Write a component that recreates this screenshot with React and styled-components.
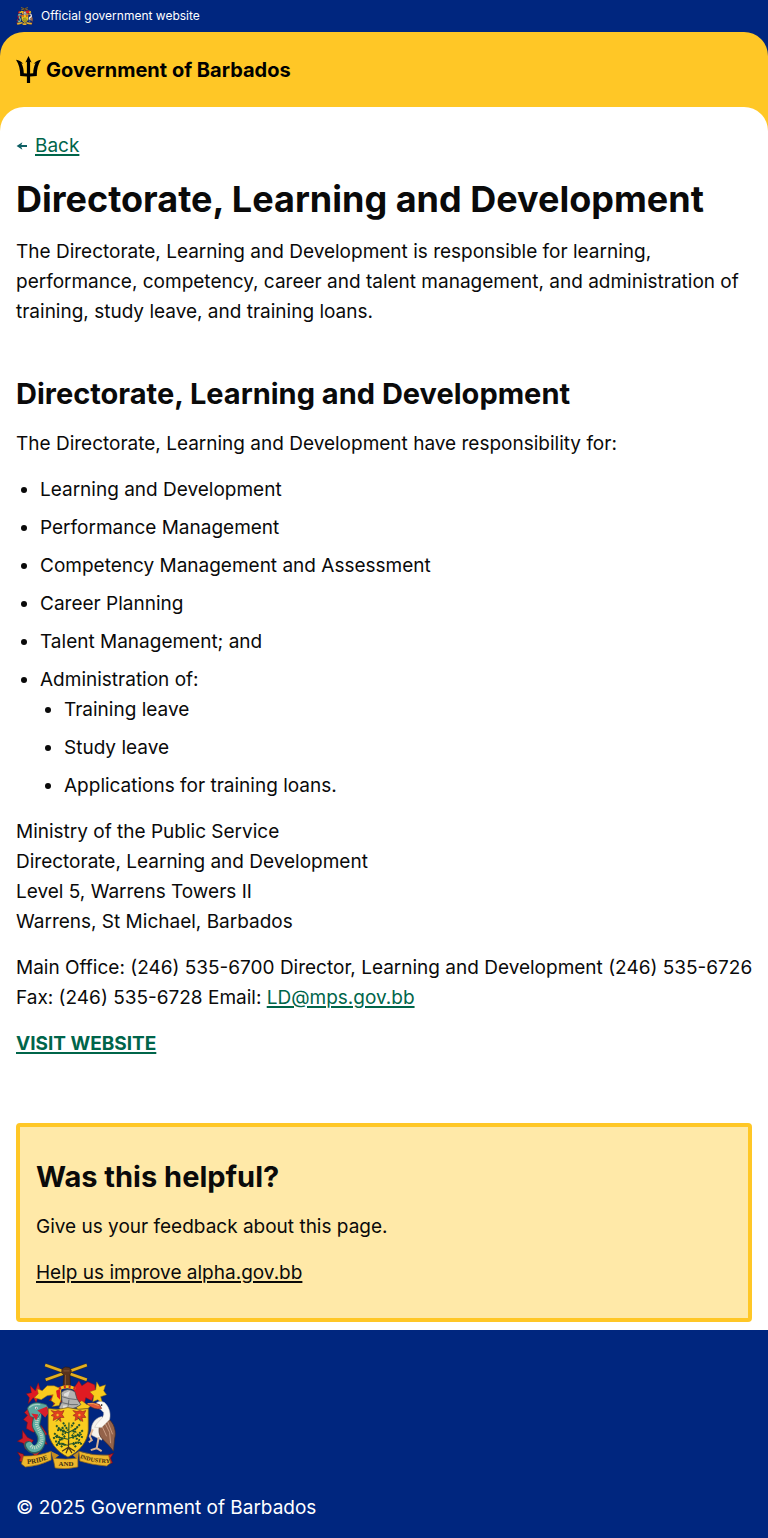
import React, { useId } from "react";
import styled, { createGlobalStyle } from "styled-components";

const color = {
  blue: "#00267f",
  yellow: "#ffc726",
  cream: "#ffe9a8",
  green: "#00654a",
  teal: "#0e5f64",
  ink: "#0a0a0a",
};

const GlobalStyle = createGlobalStyle`
  *, *::before, *::after { box-sizing: border-box; }
  body {
    margin: 0;
    background: #fff;
    color: ${color.ink};
    font-family: Inter, Roboto, sans-serif;
    font-size: 19px;
    line-height: 30px;
  }
  h1, h2, p, ul { margin: 0; }
`;

const Banner = styled.div`
  display: flex;
  align-items: center;
  gap: 8px;
  height: 32px;
  padding: 0 16px;
  background: ${color.blue};
  color: #fff;
  font-size: 12px;
  line-height: 16px;
`;

const HeaderBackdrop = styled.div`
  background: ${color.blue};
`;

const Header = styled.header`
  display: flex;
  align-items: center;
  height: 75px;
  padding: 0 16px;
  border-radius: 24px 24px 0 0;
  background: ${color.yellow};
`;

const Brand = styled.a`
  display: flex;
  align-items: center;
  gap: 5px;
  color: #000;
  font-size: 20px;
  font-weight: 700;
  line-height: 28px;
  text-decoration: none;
`;

const MainBackdrop = styled.div`
  background: ${color.yellow};
`;

const Main = styled.main`
  display: flex;
  flex-direction: column;
  padding: 24px 16px 8px;
  border-radius: 24px 24px 0 0;
  background: #fff;
`;

const Link = styled.a`
  color: ${(p) => (p.$plain ? color.ink : color.green)};
  font-weight: ${(p) => (p.$strong ? 700 : 400)};
  text-decoration: underline;
  text-decoration-thickness: 2px;
  text-underline-offset: 2px;
`;

const BackRow = styled.nav`
  display: flex;
  align-items: center;
  gap: 7px;
  margin-bottom: 16px;
`;

const PageTitle = styled.h1`
  font-size: 36px;
  font-weight: 700;
  line-height: 44px;
`;

const SectionTitle = styled.h2`
  font-size: 29px;
  font-weight: 700;
  line-height: 38px;
`;

const Stack = styled.section`
  display: flex;
  flex-direction: column;
  gap: 16px;
  margin-bottom: ${(p) => p.$after || 0}px;
`;

const List = styled.ul`
  display: flex;
  flex-direction: column;
  gap: 8px;
  padding-left: 24px;
  list-style-type: disc;
`;

const PhoneLine = styled.span`
  @media (min-width: 768px) {
    display: block;
    white-space: nowrap;
  }
`;

const Feedback = styled.aside`
  display: flex;
  flex-direction: column;
  gap: 16px;
  padding: 31px 16px 30px;
  border: 4px solid ${color.yellow};
  border-radius: 4px;
  background: ${color.cream};
`;

const Footer = styled.footer`
  display: flex;
  flex-direction: column;
  align-items: flex-start;
  gap: 24px;
  padding: 32px 16px 16px;
  background: ${color.blue};
  color: #fff;
`;

const Drawing = styled.svg`
  display: block;
  flex: none;
`;

const Trident = () => (
  <Drawing width="25" height="27" viewBox="0 0 25 27" aria-hidden="true">
    <path d="M12.5 0 15.6 6.400 14.100 5.700V17.600L17.200 17.300C17.300 13.400 18 10.200 19.600 7.300L17.700 7.700C19.900 5.200 22 4.300 25 3.700 22.100 8.300 20.700 13 20.800 20L14.100 20.400V27H10.900V20.400L4.200 20C4.300 13 2.900 8.300 0 3.700 3 4.300 5.100 5.200 7.300 7.700L5.400 7.300C7 10.200 7.700 13.400 7.800 17.300L10.900 17.600V5.700L9.400 6.400Z" />
  </Drawing>
);

const BackArrow = () => (
  <Drawing width="12" height="10" viewBox="0 0 12 10" aria-hidden="true">
    <path d="M0.6 5 6.400 1.200 5.300 4H11V6H5.300L6.400 8.800Z" fill={color.teal} />
  </Drawing>
);

const Crest = ({ width, height, lettered }) => {
  const id = useId();
  return (
    <Drawing width={width} height={height} viewBox="0 0 100 108" role="img" aria-label="Coat of arms of Barbados">
      {/* crossed sugar canes held by a hand */}
      <path d="M29.5 18 71 3M29 3 71 18" stroke="#4b3a16" strokeWidth="3.600" />
      <path d="M29.5 18 71 3M29 3 71 18" stroke="#e2b023" strokeWidth="2.600" />
      <path d="M46 7 49 5 53.500 5.500 55.500 9 54 13 54.500 25H47L48 13 45.500 11Z" fill="#59331d" stroke="#2b170d" strokeWidth=".6" />
      <path d="M47.500 9H53.500M49.500 13V23" stroke="#95633b" strokeWidth=".7" />
      {/* mantling: outer leaves, then the inner ones */}
      <g strokeWidth=".5" stroke="#7d1118" fill="#e01b22">
        <path d="M22 21 24 28 28 31 22 34 20 41 17 36 12 42 13 36 10 32 15 31 14 24 19 29Z" />
        <path d="M33 32 38 27 45 28 43 35 46 41 41 40 37 43 38 38 33 39 36 35Z" />
        <path d="M58 26 63 19 66 24 72 20 79 23 80 30 86 33 78 34 76 39 70 36 68 44 62 40 58 36Z" />
      </g>
      <g strokeWidth=".5" stroke="#8a6514" fill="#f9cb1d">
        <path d="M45 27 38 24 31 24 26 29 21 27 22 32 18 36 25 38 31 34 37 33 35 39 39 42 36 45 43 44 45 38Z" />
        <path d="M81 20 84 25 90 23 88 29 91 33 85 35 87 42 82 38 77 40 78 34 74 30 80 28ZM59 44 66 39 71 43 78 42 72 47 62 48Z" />
      </g>
      <path d="M40 29 44 27 44 38 41 35Z" fill="#e01b22" />
      {/* wreath and helmet */}
      <path d="M43 27Q51 23 59.500 27" fill="none" stroke="#f4c31c" strokeWidth="3" />
      <path d="M43 27Q51 23 59.500 27" fill="none" stroke="#c92520" strokeWidth="3" strokeDasharray="2 3" />
      <path d="M45 31Q51 25 59 30L61 37 65 43 60 46 46 50 43 46 46 40Z" fill="#b3b2b0" stroke="#494949" strokeWidth=".8" />
      <path d="M46 35 53 37 61 38M46 41 55 43 62 43M53 38 52 45" fill="none" stroke="#62656a" strokeWidth=".9" />
      <path d="M48 32 54 29 52 35 48 34ZM47 44 52 44 47 48Z" fill="#e0e0de" />
      {/* shield */}
      <path d="M32 47Q42 49 52 46 62 49 72.500 47V68C72.500 80 63 91 52 96 41 91 32 80 32 68Z" fill="#f9cd20" stroke="#806016" strokeWidth=".8" />
      <g fill="#e0401f" stroke="#a12f1b" strokeWidth=".7">
        <path d="M35 49 39 50 42 49 45 50 48 49 46 53 48 56 44 56 45 60 41 57 37 59 38 55 35 54 38 52Z" />
        <path d="M57 49 61 50 64 49 67 50 70 49 68 53 70 56 66 56 67 60 63 57 59 59 60 55 57 54 60 52Z" />
      </g>
      <path d="M40 60 44 56M65 60 62 56" stroke="#376125" strokeWidth="1" />
      <circle cx="41.500" cy="53.500" r="1.200" fill="#f5bd25" />
      <circle cx="63.500" cy="53.500" r="1.200" fill="#f5bd25" />
      <g fill="none" stroke="#20522a">
        <path d="M53 61 52.500 88M52 84 41 82M53 83 65 81M52 78 39 75M53 77 66 73M53 72 42 67M53 71 62 66" strokeWidth="1.100" />
        <path d="M38 72 43 76 47 79M37 77 42 75M40 64 45 69 50 72M41 69 46 68M47 61 50 66 52 69M58 61 55 66M64 63 59 68 56 71M67 69 61 74 56 77M67 76 62 74M66 83 62 81 57 82M40 84 45 82 50 84M39 80 44 81M43 79 47 77M48 70 46 65M58 70 61 71M60 77 64 79M45 86 48 82M60 86 57 82M49 76 46 72M56 75 58 72" strokeWidth="2" strokeDasharray="2 .8" />
      </g>
      <path d="M52.500 79V88M46 90 52.500 86 59 90M50 92 52.500 86 56 92" fill="none" stroke="#48351b" strokeWidth="1.200" />
      {/* dolphin: red fins under a scaled body */}
      <g fill="#cc1c2a" stroke="#7a101a" strokeWidth=".6">
        <path d="M15 44 8 51 11 54 7 58 11 61 10 67 17 71 22 68 17 58Z" />
        <path d="M6 69 11 76 17 79 14 84 9 88 7 82 1 80 6 77Z" />
        <path d="M25 64 31 73 27 75 31 83 25 82ZM13 87 19 96 25 89Z" />
      </g>
      <path d="M17 50C26 52 18 60 20 65 23 71 27 74 25 81 23 89 16 91 12 84" fill="none" stroke="#2b615d" strokeWidth="8.500" strokeLinecap="round" />
      <path d="M18 50C26 52 18 60 20 65 23 71 27 74 25 81 23 88 16 90 13 84" fill="none" stroke="#5fafa5" strokeWidth="6.500" strokeLinecap="round" />
      <path d="M19 53C23 56 19 61 21 65 24 71 27 75 25 81 22 87 17 88 14 84" fill="none" stroke="#c4d6c6" strokeWidth="3.400" strokeDasharray="1 1" />
      <path d="M11 47C13 41 21 40 26 42L30 43 32 46 30 52 24 52 21 57 14 55Z" fill="#5ba8a0" stroke="#2d5b56" strokeWidth=".7" />
      <path d="M21 49 31 45 32 52 29 56 25 52ZM15 52 22 53 20 59Z" fill="#d81f2c" />
      <path d="M13 46Q17 42 24 43" fill="none" stroke="#a5d0c4" strokeWidth="1.200" />
      <circle cx="20" cy="46.500" r="1.300" fill="#fff" />
      <circle cx="20" cy="46.500" r=".6" />
      {/* pelican */}
      <path d="M86 55C78 57 74 64 76 74L86 79 94 63Z" fill="#f5f2eb" stroke="#b7b2aa" strokeWidth=".5" />
      <path d="M88 55C96 57 102 67 99 78L98 90 93 84 87 78C81 73 83 63 88 55Z" fill="#94634a" stroke="#482b20" strokeWidth=".7" />
      <path d="M89 61 94 71 95 82M86 64 91 75M92 60 97 73" fill="none" stroke="#c99c82" strokeWidth="1" />
      <path d="M81 46C77 41 84 38 89 41 95 47 95 54 94 58L86 66 79 66C81 60 89 57 88 51L85 48Z" fill="#fbf9f3" stroke="#bdb7ae" strokeWidth=".5" />
      <path d="M71 42Q78 40 84 43L86 47Q78 49 71 42Z" fill="#e0583a" stroke="#712d1f" strokeWidth=".6" />
      <path d="M72 42Q78 41 83 44" fill="none" stroke="#f2a24d" strokeWidth="1" />
      <circle cx="86" cy="43.500" r=".8" />
      <path d="M77 68 74 75 76 79 73 81M83 76 81 87 75 89M81 87 86 90" fill="none" stroke="#dbb493" strokeWidth="2" />
      {/* motto scroll */}
      <path d="M1 91 7 93 10 102 3 100 4 96ZM98 92 92 94 90 103 97 102 95 97Z" fill="#c3202b" stroke="#641019" strokeWidth=".6" />
      <g fill="#edb62b" stroke="#8b6318" strokeWidth=".7">
        <path d="M7 95Q23 95 35 90L35 99Q23 105 9 106L5 103Z" />
        <path d="M63 90Q77 95 93 94L95 102 91 105Q76 104 64 100Z" />
        <path d="M37 97Q50 99 62 97L62 106Q50 109 39 107Z" />
      </g>
      <path d="M35 90 43 94 37 99ZM63 90 57 94 62 99Z" fill="#c48c20" />
      {lettered && (
        <g fill="#392b12" fontFamily="Liberation Serif, serif" fontSize="7" fontWeight="700">
          <path id={`${id}p`} d="M11 103Q24 102 37 96" fill="none" />
          <path id={`${id}i`} d="M64 97Q77 102 95 102" fill="none" />
          <text><textPath href={`#${id}p`}>PRIDE</textPath></text>
          <text x="50" y="105" textAnchor="middle">AND</text>
          <text fontSize="6"><textPath href={`#${id}i`}>INDUSTRY</textPath></text>
        </g>
      )}
    </Drawing>
  );
};

const duties = [
  "Learning and Development",
  "Performance Management",
  "Competency Management and Assessment",
  "Career Planning",
  "Talent Management; and",
];

const administered = ["Training leave", "Study leave", "Applications for training loans."];

export default function App() {
  return (
    <>
      <GlobalStyle />
      <Banner>
        <Crest width={17} height={18} />
        Official government website
      </Banner>
      <HeaderBackdrop>
        <Header>
          <Brand href="#home">
            <Trident />
            Government of Barbados
          </Brand>
        </Header>
      </HeaderBackdrop>
      <MainBackdrop>
        <Main>
          <BackRow>
            <BackArrow />
            <Link href="#back">Back</Link>
          </BackRow>
          <Stack $after={48}>
            <PageTitle>Directorate, Learning and Development</PageTitle>
            <p>
              The Directorate, Learning and Development is responsible for learning, performance,
              competency, career and talent management, and administration of training, study leave,
              and training loans.
            </p>
          </Stack>
          <Stack $after={64}>
            <SectionTitle>Directorate, Learning and Development</SectionTitle>
            <p>The Directorate, Learning and Development have responsibility for:</p>
            <List>
              {duties.map((duty) => (
                <li key={duty}>{duty}</li>
              ))}
              <li>
                Administration of:
                <List>
                  {administered.map((item) => (
                    <li key={item}>{item}</li>
                  ))}
                </List>
              </li>
            </List>
            <p>
              Ministry of the Public Service
              <br />
              Directorate, Learning and Development
              <br />
              Level 5, Warrens Towers II
              <br />
              Warrens, St Michael, Barbados
            </p>
            <p>
              <PhoneLine>
                Main Office: (246) 535-6700 Director, Learning and Development (246) 535-6726
              </PhoneLine>{" "}
              Fax: (246) 535-6728 Email: <Link href="mailto:LD@mps.gov.bb">LD@mps.gov.bb</Link>
            </p>
            <p>
              <Link href="#website" $strong>
                VISIT WEBSITE
              </Link>
            </p>
          </Stack>
          <Feedback>
            <SectionTitle>Was this helpful?</SectionTitle>
            <p>Give us your feedback about this page.</p>
            <p>
              <Link href="#feedback" $plain>
                Help us improve alpha.gov.bb
              </Link>
            </p>
          </Feedback>
        </Main>
      </MainBackdrop>
      <Footer>
        <Crest width={100} height={107} lettered />
        <p>© 2025 Government of Barbados</p>
      </Footer>
    </>
  );
}
